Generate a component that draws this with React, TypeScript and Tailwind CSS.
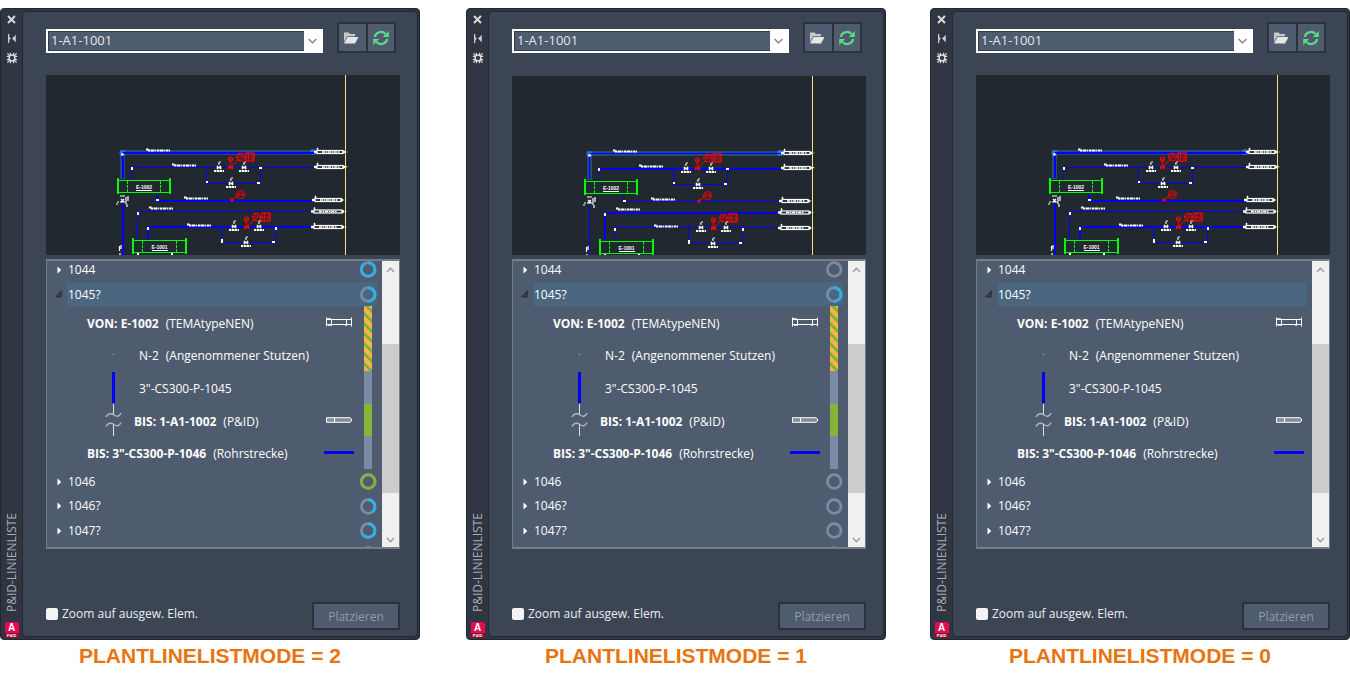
import React from "react";

type Mode = 0 | 1 | 2;

interface Ring {
  value: number;
  color?: string;
}

interface PanelSpec {
  mode: Mode;
  drawingShift: number;
  strong: boolean;
  rings: Ring[] | null;
}

const BLUE = "#33aee6";
const GREEN = "#86b03c";

const panels: PanelSpec[] = [
  {
    mode: 2,
    drawingShift: 0,
    strong: true,
    rings: [
      { value: 0.93 },
      { value: 0.5 },
      { value: 1, color: GREEN },
      { value: 0.4 },
      { value: 0.68 },
      { value: 0.5 },
    ],
  },
  {
    mode: 1,
    drawingShift: 1,
    strong: false,
    rings: [{ value: 0 }, { value: 0.5 }, { value: 0 }, { value: 0 }, { value: 0 }, { value: 0 }],
  },
  { mode: 0, drawingShift: 2, strong: true, rings: null },
];

function StatusRing({ ring }: { ring?: Ring }) {
  if (!ring) return <span className="w-[17px] shrink-0" />;
  return (
    <svg className="h-[17px] w-[17px] shrink-0" viewBox="0 0 17 17" fill="none" aria-hidden="true">
      <circle cx="8.2" cy="8.5" r="6.800" stroke="#7b8ba5" strokeWidth="2.800" />
      {ring.value > 0 && (
        <circle
          cx="8.2"
          cy="8.5"
          r="6.800"
          stroke={ring.color ?? BLUE}
          strokeWidth="3"
          pathLength={100}
          strokeDasharray={`${ring.value * 100} 100`}
          transform="rotate(-90 8.2 8.5)"
        />
      )}
    </svg>
  );
}

/* ---------- drawing preview ---------- */

function Valve({ x, y }: { x: number; y: number }) {
  return (
    <g>
      <path d={`M${x - 2} ${y - 1}v3h1v-1h2v1h1v-3h-1v1h-2v-1z`} fill="#fff" stroke="#fff" strokeWidth=".6" />
      <path d={`M${x} ${y - 2}v-2M${x - 1} ${y - 4}h1M${x} ${y - 5}h2`} stroke="#fff" />
      <path d={`M${x - 5} ${y + 4}h10`} stroke="#fff" strokeWidth="1.8" strokeDasharray="2 .6 3 .4" />
    </g>
  );
}

function ControlValve({ x, y }: { x: number; y: number }) {
  return (
    <g stroke="#f00" fill="none">
      <path d={`M${x - 2} ${y - 1}v3l4-3v3z`} fill="#f00" />
      <path d={`M${x} ${y}v-6M${x} ${y}l7 -7`} />
      <circle cx={x} cy={y - 8} r="2" strokeWidth="1.2" />
      <path d={`M${x - 2} ${y - 8}h4`} />
      <circle cx={x + 10} cy={y - 10} r="4" />
      <path d={`M${x + 6} ${y - 10}h8M${x + 8} ${y - 12}h4M${x + 8} ${y - 8}h2`} />
      <rect x={x + 15.5} y={y - 14} width="8" height="8" strokeWidth="1.3" />
      <path d={`M${x + 16} ${y - 10}h8M${x + 18} ${y - 14}v8M${x + 21} ${y - 12}h2M${x + 20} ${y - 8}h3`} />
    </g>
  );
}

function Connector({ x, y, wide = false }: { x: number; y: number; wide?: boolean }) {
  const body = wide ? 28 : 26;
  return (
    <g>
      <path d={`M${x - 3} ${y}h4`} stroke="#fff" strokeWidth="2.4" />
      <rect x={x} y={y - 1.5} width={body} height="3" fill="#22282f" stroke="#fff" strokeWidth="1.2" />
      <path d={`M${x + 5} ${y}h18`} stroke="#fff" strokeWidth="1.4" strokeDasharray="3 .8 1.5 .8" />
      <path d={`M${x + body} ${y - 1}h2v2h-2zM${x} ${y - 4}h1v2h-1z`} fill="#fff" stroke="#fff" strokeWidth=".5" />
      <path d={`M${x + body + 2} ${y}h3`} stroke="#1d9a45" />
    </g>
  );
}

function LineTag({ x, y }: { x: number; y: number }) {
  return (
    <path
      d={`M${x} ${y - 0.5}h3M${x + 2} ${y + 0.5}h22`}
      stroke="#fff"
      strokeWidth="2"
      strokeDasharray="2 .5 4 .6 1.2 .7"
    />
  );
}

function Exchanger({ x, y, w, label }: { x: number; y: number; w: number; label: string }) {
  return (
    <g stroke="#0f0" fill="none" shapeRendering="crispEdges">
      <rect x={x + 1.5} y={y + 2.5} width={w - 3} height="12" />
      <path d={`M${x + 1} ${y}v16M${x + w - 1} ${y}v16`} strokeWidth="2" />
      <path d={`M${x + 10.5} ${y + 3}v11M${x + w - 10.5} ${y + 3}v11`} strokeDasharray="3 1" />
      <text
        x={x + w / 2}
        y={y + 11}
        fontSize="5"
        fontFamily="Liberation Sans, sans-serif"
        fontWeight="bold"
        fill="#fff"
        stroke="none"
        textAnchor="middle"
      >
        {label}
      </text>
      <path d={`M${x + w / 2 - 8} ${y + 12.5}h16`} stroke="#fff" />
    </g>
  );
}

function Drawing({ shift, strong }: { shift: number; strong: boolean }) {
  const a = strong ? 2 : 1;
  const b = strong ? 1 : 2;
  return (
    <svg
      className={
        strong
          ? "block h-[180px] w-full bg-[#22282f]"
          : "block h-[180px] w-full border-t border-[#3c4554] bg-[#22282f]"
      }
      viewBox="0 0 354 180"
      preserveAspectRatio="xMinYMin slice"
      role="img"
      aria-label="P&ID"
    >
      <g transform={`translate(${shift} 0)`}>
        <path
          d="M76.500 104V77.500H270"
          fill="none"
          stroke="#2a5398"
          strokeOpacity=".75"
          strokeWidth="5"
        />
        <circle cx="76.500" cy="78" r="3" fill="#2f6fd8" />
        <circle cx="267" cy="77" r="3" fill="#2f6fd8" />
        <g stroke="#00f" fill="none" shapeRendering="crispEdges">
          <path d="M76.500 103V77.500H269" strokeWidth={a} />
          <path d="M85.500 104V92" />
          <path d="M85 92.500H268" strokeWidth={b} />
          <path d="M160.500 92V108.500H214.500V92" />
          <path d="M110.500 119V125.500H268" strokeWidth={a} />
          <path d="M91.500 164V136.500H266" strokeWidth={b} />
          <path d="M101.500 164V151.500H268" strokeWidth={a} />
          <path d="M175.500 151V167.500H229.500V151" />
          <path d="M76.500 128V180" strokeWidth={a} />
        </g>
        <path d="M75 79.500l1.500-2 1.500 2v1h-3z" fill="#fff" />
        <path
          d="M85 92h2v3h-2zM160 106h2v2h-2zM213 92h3v2h-3zM211 107h3v2h-3zM110 124h3v2h-3zM91 137h2v3h-2zM101 152h2v3h-2zM175 164h2v4h-2zM229 152h2v3h-2zM226 166h3v2h-3zM91 178h2v2h-2zM125 178h2v2h-2z"
          fill="#fff"
        />
        <path
          d="M74 121h5M75 124l3 3M78 124l-3 3M74 127h5M71 127h2M70 129h2M80 122v7M82 121v5M81 129v3M73.500 171v5M75 170v4M74 178v2"
          stroke="#fff"
          strokeWidth="1.2"
        />
        <LineTag x={100} y={75} />
        <LineTag x={126} y={90} />
        <LineTag x={138} y={123} />
        <LineTag x={103} y={133} />
        <LineTag x={141} y={150} />
        <Valve x={173} y={92} />
        <Valve x={198} y={92} />
        <Valve x={185} y={108} />
        <Valve x={188} y={151} />
        <Valve x={213} y={151} />
        <Valve x={200} y={167} />
        <ControlValve x={184.5} y={92} />
        <ControlValve x={200.5} y={152} />
        <g stroke="#f00" fill="none">
          <circle cx="194.500" cy="119.500" r="4" />
          <path d="M190.500 120h8M193 117v3M196 117v3M186 125l5-4" />
          <rect x="185" y="124" width="2" height="2" fill="#f00" />
        </g>
        <Exchanger x={71} y={103} w={54} label="E-1002" />
        <Exchanger x={86} y={163} w={55} label="E-1001" />
        <Connector x={271} y={77} />
        <Connector x={271} y={92} />
        <Connector x={269} y={125} />
        <Connector x={268} y={136.5} wide />
        <Connector x={268} y={152} wide />
        <path d="M299.500 0v180" stroke="#ffdf80" shapeRendering="crispEdges" />
        <path d="M299 91.500h2" stroke="#ff0" />
      </g>
    </svg>
  );
}

/* ---------- tree ---------- */

function ParentRow({
  label,
  ring,
  open = false,
  size,
}: {
  label: string;
  ring?: Ring;
  open?: boolean;
  size: string;
}) {
  return (
    <li className={`flex items-center ${size}`}>
      <button type="button" aria-expanded={open} className="flex h-full min-w-0 flex-1 items-center text-left">
        <svg className="mr-1 ml-2 h-2 w-2 shrink-0" viewBox="0 0 8 8" aria-hidden="true">
          {open ? (
            <path d="M.8 6.800h5.400V1.200z" fill="#454545" stroke="#262626" />
          ) : (
            <path d="M2.500.5v7L6.300 4z" fill="#fff" />
          )}
        </svg>
        <span className={`flex h-full flex-1 items-center pl-px ${open ? "bg-[#4a677f] pt-px" : ""}`}>
          {label}
        </span>
      </button>
      <span className={`flex h-full items-center ${open ? "bg-[#4a677f]" : ""}`}>
        <StatusRing ring={ring} />
      </span>
    </li>
  );
}

function ChildRow({
  children,
  text,
  note,
  indent,
  icon,
  strong = false,
}: {
  children?: React.ReactNode;
  text: string;
  note?: string;
  indent: string;
  icon?: React.ReactNode;
  strong?: boolean;
}) {
  return (
    <li className="flex items-center">
      <span className={`flex h-full shrink-0 items-center ${indent}`}>{children}</span>
      <span className="flex flex-1 gap-[7px] pt-[3px] whitespace-nowrap">
        <span className={strong ? "font-bold" : ""}>{text}</span>
        {note && <span>{note}</span>}
      </span>
      <span className="flex w-[30px] shrink-0 justify-center">{icon}</span>
    </li>
  );
}

const ExchangerIcon = (
  <svg width="26" height="10" viewBox="0 0 26 10" fill="none" stroke="#fff" aria-hidden="true">
    <path d="M1 2.500h24M1 7.500h24M.5 .5v9M25.500 .5v9M5.500 2v5M20.500 2v5" />
    <path d="M1 2h4M2 8h4M19 8h2" strokeWidth="1.500" />
  </svg>
);

const ConnectorIcon = (
  <svg width="26" height="6" viewBox="0 0 26 6" aria-hidden="true">
    <path d="M.5 .7h23.500l1.500 1.300v2l-1.500 1.300H.5z" fill="#858d99" stroke="#fff" />
    <path d="M8.500 1v4" stroke="#fff" />
  </svg>
);

const LineIcon = (
  <svg width="30" height="5" viewBox="0 0 30 5" aria-hidden="true">
    <path d="M0 2.500h30" stroke="#56616a" strokeWidth="5" />
    <path d="M0 2.500h30" stroke="#00f" strokeWidth="3" />
  </svg>
);

function LineTree({ rings }: { rings: Ring[] | null }) {
  return (
    <div className="mt-1 flex border border-y-2 border-[#747d89] bg-[#4f5b6e] text-[12px] leading-4 text-white">
      <ul className="min-w-0 flex-1 overflow-hidden pr-[5px]">
        <ParentRow label="1044" ring={rings?.[0]} size="h-[21px] pb-1" />
        <ParentRow label="1045?" ring={rings?.[1]} open size="h-6" />
        <li className="flex h-[163px]">
          <ul className={`grid min-w-0 flex-1 grid-rows-5 ${rings ? "mr-1.5" : "mr-[3px]"}`}>
            <ChildRow text="VON: E-1002" note="(TEMAtypeNEN)" indent="w-10" strong icon={ExchangerIcon} />
            <ChildRow text="N-2" note="(Angenommener Stutzen)" indent="w-[92px] pl-[66px]">
              <span className="h-px w-px bg-[#c9cdd3]" />
            </ChildRow>
            <ChildRow text={'3"-CS300-P-1045'} indent="w-[92px] pl-[65px]">
              <span className="h-[31px] w-[3px] bg-[#0000ff]" />
            </ChildRow>
            <ChildRow text="BIS: 1-A1-1002" note="(P&ID)" indent="w-[87px] pl-[58px]" strong icon={ConnectorIcon}>
              <svg width="17" height="32" viewBox="0 0 17 32" fill="none" aria-hidden="true">
                <path d="M8.500 0v11M8.500 20.500V32" stroke="#dfe2e6" />
                <path
                  d="M1 13c2-4 5-4 8-2s5 2 7-2M1 22.500c2-4 5-4 8-2s5 2 7-2"
                  stroke="#b3b8bf"
                  strokeWidth="1.500"
                />
              </svg>
            </ChildRow>
            <ChildRow text={'BIS: 3"-CS300-P-1046'} note="(Rohrstrecke)" indent="w-10" strong icon={LineIcon} />
          </ul>
          {rings && (
            <div className="flex w-[17px] pl-1">
              <div className="grid w-2 grid-rows-5">
                <span className="row-span-2 bg-[repeating-linear-gradient(45deg,#fdb445_0px,#fdb445_4px,#7db343_4px,#7db343_7px)]" />
                <span className="bg-[#7b8ba5]" />
                <span className="bg-[#86b53a]" />
                <span className="bg-[#7b8ba5]" />
              </div>
            </div>
          )}
        </li>
        <ParentRow label="1046" ring={rings?.[2]} size="h-[25px]" />
        <ParentRow label="1046?" ring={rings?.[3]} size="h-6" />
        <ParentRow label="1047?" ring={rings?.[4]} size="h-[25px]" />
        <li className="flex h-1 items-start justify-end overflow-hidden pt-[3px]">
          <StatusRing ring={rings?.[5]} />
        </li>
      </ul>
      <div className="flex w-[17px] shrink-0 flex-col bg-[#f0f0f0]">
        <button type="button" aria-label="Nach oben" className="flex h-[83px] justify-center pt-1.5">
          <svg width="9" height="6" viewBox="0 0 9 6" fill="none" stroke="#9a9a9a" strokeWidth="1.300">
            <path d="M1 5l3.500-3.800L8 5" />
          </svg>
        </button>
        <div className="flex-1 bg-[#cdcdcd]" />
        <button type="button" aria-label="Nach unten" className="flex h-[54px] items-end justify-center pb-1">
          <svg width="9" height="6" viewBox="0 0 9 6" fill="none" stroke="#9a9a9a" strokeWidth="1.300">
            <path d="M1 1l3.500 3.800L8 1" />
          </svg>
        </button>
      </div>
    </div>
  );
}

/* ---------- palette frame ---------- */

function Rail() {
  return (
    <div className="flex w-[21px] shrink-0 flex-col items-center pt-[5px] pb-px">
      <button type="button" aria-label="Schließen">
        <svg width="11" height="11" viewBox="0 0 11 11" stroke="#d9dbdf" strokeWidth="2" fill="none">
          <path d="M2 2l7 7M9 2L2 9" />
        </svg>
      </button>
      <button type="button" aria-label="Automatisch ausblenden" className="mt-2">
        <svg width="11" height="11" viewBox="0 0 11 11" fill="#c9ccd2">
          <path d="M2 1h1.300v9H2zM3.300 4L5 5.500 3.300 7zM9.800 1.800v7.400L6 5.500z" />
        </svg>
      </button>
      <button type="button" aria-label="Eigenschaften" className="mt-2">
        <svg width="12" height="12" viewBox="0 0 12 12" fill="none" stroke="#d9dbdf">
          <circle cx="6" cy="6" r="2.900" strokeWidth="1.500" />
          <path
            d="M4.400 3.500V.8M7.600 3.500V.8M4.400 8.500v2.700M7.600 8.500v2.700M3.500 4.400H.8M3.500 7.600H.8M8.500 4.400h2.700M8.500 7.600h2.700M1.400 1.400l2.400 2.400M10.600 1.400L8.200 3.800M1.400 10.600l2.400-2.400M10.600 10.600L8.200 8.200"
            strokeWidth="1.200"
          />
        </svg>
      </button>
      <span className="mt-auto rotate-180 text-[12px] leading-4 whitespace-nowrap text-[#a9aeb8] [writing-mode:vertical-rl]">
        P&amp;ID-LINIENLISTE
      </span>
      <span className="mt-2.5 flex w-[14px] flex-col items-center rounded-[2px] bg-[#e50b52] font-['Liberation_Sans',sans-serif] font-bold text-white">
        <span className="text-[10px] leading-[11px]">A</span>
        <span className="w-full rounded-b-[2px] bg-[#8d0b34] text-center text-[4px] leading-[5px]">P&amp;ID</span>
      </span>
    </div>
  );
}

function Toolbar() {
  return (
    <div className="mb-[22px] flex items-center">
      <div className="relative mt-1.5 flex h-6 min-w-0 flex-1 border-2 border-white bg-[#4f5b6e]">
        <select
          aria-label="Zeichnung"
          className="h-5 w-full appearance-none bg-[#4f5b6e] pb-px pl-[3px] text-[13px] leading-[19px] text-[#e4e6ea] shadow-[inset_0_0_0_1px_#333c4a] outline-none"
        >
          <option>1-A1-1001</option>
        </select>
        <span className="pointer-events-none absolute inset-y-0 right-0 flex w-[17px] items-center justify-center bg-white">
          <svg width="9" height="6" viewBox="0 0 9 6" fill="none" stroke="#777" strokeWidth="1.200">
            <path d="M.7 1l3.800 3.800L8.300 1" />
          </svg>
        </span>
      </div>
      <div className="mr-1 ml-[14px] flex gap-[2px] border-2 border-[#2b323e] bg-[#2b323e]">
        <button type="button" aria-label="Öffnen" className="flex h-[27px] w-[27px] items-center justify-center bg-[#4f5b6e] pr-[3px]">
          <svg width="16" height="14" viewBox="0 0 16 14">
            <path d="M1 11V1.500h4.500L7 3h5v2.200H4z" fill="#c9c9c9" />
            <path d="M4.500 6H15.500L12 12.500H1z" fill="#e6e6e6" />
          </svg>
        </button>
        <button type="button" aria-label="Aktualisieren" className="flex h-[27px] w-[26px] items-center justify-center bg-[#4f5b6e]">
          <svg width="18" height="16" viewBox="0 0 18 16" fill="none" stroke="#5ddb86" strokeWidth="2.200">
            <path d="M2.800 7A6.200 5.800 0 0 1 13.600 4M15.200 9A6.200 5.800 0 0 1 4.400 12" />
            <path d="M16.800 1v6h-6zM1.200 15V9h6z" fill="#5ddb86" stroke="none" />
          </svg>
        </button>
      </div>
    </div>
  );
}

function Palette({ spec }: { spec: PanelSpec }) {
  return (
    <section className="flex rounded-[4px] border border-[#222833] bg-[#2f3642]">
      <Rail />
      <div className="my-[2px] mr-px min-w-0 flex-1 rounded-[4px] border border-[#232934] bg-[#3c4554] pt-[10px] pr-[17px] pb-1.5 pl-[23px]">
        <Toolbar />
        <Drawing shift={spec.drawingShift} strong={spec.strong} />
        <LineTree rings={spec.rings} />
        <div className="mt-[53px] flex items-center justify-between">
          <label className="mb-1 flex items-center gap-1 text-[12px] leading-4 text-[#eceef1]">
            <input type="checkbox" className="h-3 w-3 appearance-none rounded-[2px] bg-[#f4f4f4]" />
            Zoom auf ausgew. Elem.
          </label>
          <button
            type="button"
            disabled
            className="h-7 w-[88px] border-2 border-[#2b323e] bg-[#4f5b6e] pt-px text-[12px] leading-4 text-[#949ba6]"
          >
            Platzieren
          </button>
        </div>
      </div>
    </section>
  );
}

const columnGap = ["", "ml-[46px]", "ml-[44px]"];

export default function App() {
  return (
    <main className="flex min-h-screen bg-white pt-2 font-['Open_Sans','Noto_Sans',sans-serif]">
      {panels.map((spec, i) => (
        <div key={spec.mode} className={`min-w-0 flex-1 ${columnGap[i]}`}>
          <Palette spec={spec} />
          <p className="mt-1 text-center font-['Liberation_Sans',sans-serif] text-[21px] leading-6 font-bold text-[#e8740f]">
            PLANTLINELISTMODE = {spec.mode}
          </p>
        </div>
      ))}
    </main>
  );
}
